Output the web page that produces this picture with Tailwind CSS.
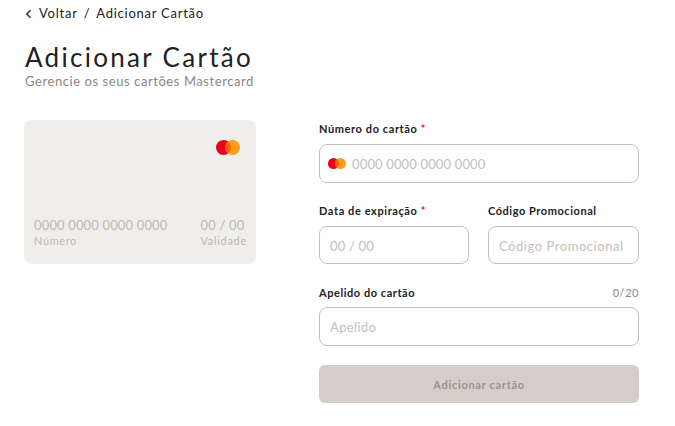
<!DOCTYPE html>
<html lang="pt">
<head>
  <meta charset="UTF-8" />
  <title>Adicionar Cartão</title>
  <script src="https://cdn.jsdelivr.net/npm/@tailwindcss/browser@4"></script>
</head>
<body class="bg-white text-[#222] font-['Lato',sans-serif] overflow-hidden">
  <div class="w-[675px] h-[426px] pl-6 pt-[6px]">

    <!-- Breadcrumb -->
    <div class="flex items-center h-4 text-[13px] tracking-[0.75px]">
      <svg class="w-[8px] h-[10px] mr-[7px]" viewBox="0 0 8 10" fill="none" stroke="#333" stroke-width="1.5"><path d="M6.5 1.2 2.8 5l3.7 3.8"/></svg>
      <span>Voltar</span>
      <span class="mx-[6px]">/</span>
      <span>Adicionar Cartão</span>
    </div>

    <!-- Title -->
    <h1 class="mt-[20px] text-[26px] leading-[30px] tracking-[2.3px] font-normal pl-px">Adicionar Cartão</h1>
    <p class="mt-[2px] text-[13px] leading-[15px] text-[#8a8783] tracking-[0.57px] pl-px">Gerencie os seus cartões Mastercard</p>

    <div class="flex mt-[31px]">
      <!-- Card preview -->
      <div class="w-[232px] h-[144px] bg-[#f0eeeb] rounded-lg pl-[10px] pr-[9px] pt-5 flex flex-col shrink-0">
        <div class="flex justify-end pr-[7px] h-[15px]">
          <svg width="24" height="15" viewBox="0 0 24 15"><circle cx="7.5" cy="7.5" r="7.5" fill="#eb001b"/><circle cx="16.5" cy="7.5" r="7.5" fill="#f79e1b"/><path d="M12 1.5a7.5 7.5 0 0 1 0 12 7.5 7.5 0 0 1 0-12z" fill="#ff5f00"/></svg>
        </div>
        <div class="flex justify-between mt-[61px] text-[#bdb9b3]">
          <div>
            <div class="text-[13px] leading-[18px] tracking-[0.15px]">0000 0000 0000 0000</div>
            <div class="text-[11px] leading-[14px] tracking-[0.6px]">Número</div>
          </div>
          <div>
            <div class="text-[13px] leading-[18px] tracking-[0.2px]">00 / 00</div>
            <div class="text-[11px] leading-[14px] tracking-[0.7px]">Validade</div>
          </div>
        </div>
      </div>

      <!-- Form -->
      <form class="w-[320px] ml-[63px] mt-px">
        <label class="block text-[11px] leading-[16px] font-bold tracking-[0.6px]">Número do cartão <span class="text-[#d9262c]">*</span></label>
        <div class="mt-[7px] h-[39px] border border-[#c4c0ba] rounded-lg flex items-center pl-2">
          <svg width="18" height="11" viewBox="0 0 18 11"><circle cx="5.5" cy="5.5" r="5.5" fill="#eb001b"/><circle cx="12.5" cy="5.5" r="5.5" fill="#f79e1b"/><path d="M9 1.2a5.5 5.5 0 0 1 0 8.6 5.5 5.5 0 0 1 0-8.6z" fill="#ff5f00"/></svg>
          <span class="ml-[6px] mt-[2px] text-[13px] text-[#c4c0ba] tracking-[0.15px]">0000 0000 0000 0000</span>
        </div>

        <div class="flex gap-[19px] mt-[20px]">
          <div class="w-[150px]">
            <label class="block text-[11px] leading-[16px] font-bold tracking-[0.6px]">Data de expiração <span class="text-[#d9262c]">*</span></label>
            <div class="mt-[7px] h-[38px] border border-[#c4c0ba] rounded-lg flex items-center pl-[10px] pt-[3px] text-[13px] text-[#c4c0ba] tracking-[0.2px]">00 / 00</div>
          </div>
          <div class="w-[151px]">
            <label class="block text-[11px] leading-[16px] font-bold tracking-[0.55px]">Código Promocional</label>
            <div class="mt-[7px] h-[38px] border border-[#c4c0ba] rounded-lg flex items-center pl-[10px] pt-[3px] text-[13px] text-[#c4c0ba] tracking-[0.55px]">Código Promocional</div>
          </div>
        </div>

        <div class="flex justify-between mt-[21px] text-[11px] leading-[16px] tracking-[0.55px]">
          <label class="font-bold">Apelido do cartão</label>
          <span class="text-[#8a8783]">0/20</span>
        </div>
        <div class="mt-[6px] h-[39px] border border-[#c4c0ba] rounded-lg flex items-center pl-[10px] pt-[2px] text-[13px] text-[#c4c0ba] tracking-[0.35px]">Apelido</div>

        <button type="button" class="mt-[19px] w-full h-[38px] bg-[#d3cec8] rounded-md pt-[2px] text-[11px] font-bold text-[#9a938d] tracking-[0.7px]">Adicionar cartão</button>
      </form>
    </div>
  </div>
</body>
</html>
